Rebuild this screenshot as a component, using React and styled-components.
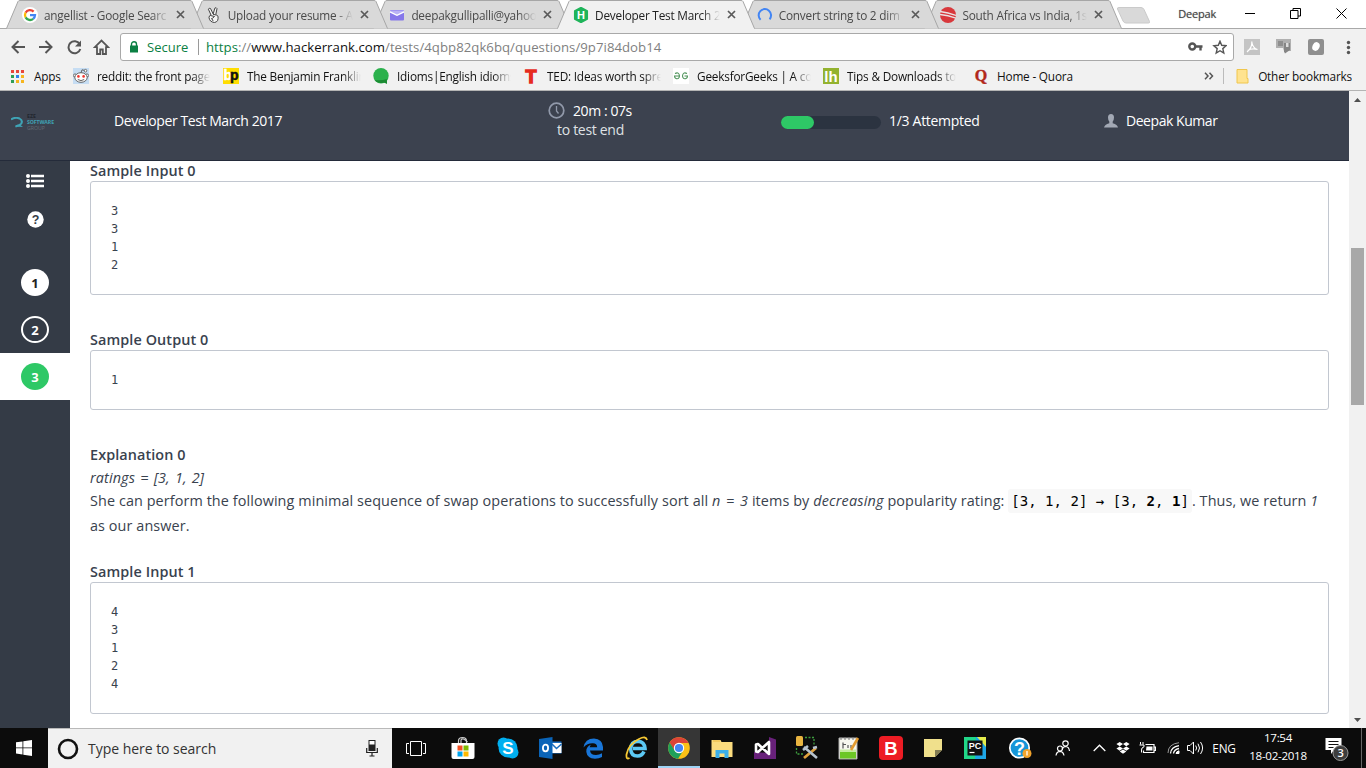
import React from "react";
import styled, { createGlobalStyle, css } from "styled-components";

const GlobalStyle = createGlobalStyle`
  * { box-sizing: border-box; }
  html, body { margin: 0; padding: 0; overflow: hidden; }
  body { font-family: "Open Sans", "Noto Sans", sans-serif; background: #fff; }
  svg { display: block; flex: none; }
`;

const Screen = styled.div`
  width: 1366px;
  height: 768px;
  display: flex;
  flex-direction: column;
  overflow: hidden;
`;

/* ---------- browser chrome ---------- */
const TabStrip = styled.div`
  height: 29px;
  padding-left: 6px;
  display: flex;
  background: #fff;
  border-bottom: 1px solid #a9a9a9;
  flex: none;
`;
const Tab = styled.div`
  position: relative;
  z-index: ${(p) => p.$z};
  width: 183.7px;
  height: 29px;
  flex: none;
  display: flex;
  align-items: center;
  padding-left: 16px;
`;
const TabShape = styled.svg`
  position: absolute;
  left: 0;
  top: 0;
  z-index: -1;
`;
const TabIcon = styled.span`
  width: 16px;
  height: 16px;
  margin-right: 6px;
  flex: none;
`;
const fade = css`
  mask-image: linear-gradient(to right, #000 calc(100% - 18px), transparent);
`;
const TabTitle = styled.span`
  width: 125px;
  margin-right: 7px;
  overflow: hidden;
  white-space: nowrap;
  font-size: 11.8px;
  line-height: 18px;
  letter-spacing: -0.22px;
  color: ${(p) => (p.$active ? "#222" : "#4a4a4a")};
  ${fade}
`;
const NewTab = styled.svg`
  margin: 6px 0 0 8px;
`;
const WindowBar = styled.div`
  margin-left: auto;
  display: flex;
  align-items: center;
  height: 27px;
`;
const Profile = styled.span`
  font-size: 11px;
  color: #444;
  letter-spacing: -0.2px;
  text-shadow: 0 0 1px #999;
  margin-right: 29px;
`;
const WinIcon = styled.svg`
  margin-right: ${(p) => p.$mr}px;
`;

const Toolbar = styled.div`
  height: 34px;
  display: flex;
  align-items: center;
  background: #f1f1f1;
  padding: 2px 0 0 11px;
  flex: none;
`;
const NavIcon = styled.svg`
  margin-right: ${(p) => p.$mr}px;
`;
const Omnibox = styled.div`
  width: 1114px;
  height: 28px;
  display: flex;
  align-items: center;
  background: #fff;
  border: 1px solid #a9a9a9;
  border-radius: 3px;
  padding: 0 6px 0 8px;
  font-size: 13.2px;
  white-space: nowrap;
`;
const Secure = styled.span`
  color: #0b8043;
  margin-left: 8px;
  width: 43px;
  font-size: 13px;
`;
const Divider = styled.i`
  width: 1px;
  height: 16px;
  background: #9a9a9a;
  margin: 0 7px 0 8px;
`;
const Url = styled.span`
  flex: 1;
  color: #7f7f7f;
  letter-spacing: 0.03px;
`;
const Scheme = styled.span`
  color: #0b8043;
`;
const Host = styled.span`
  color: #111;
`;

const Bookmarks = styled.div`
  height: 28px;
  display: flex;
  align-items: center;
  background: #f1f1f1;
  border-bottom: 1px solid #b4b4b4;
  padding: 0 0 1px 10px;
  flex: none;
`;
const Bookmark = styled.div`
  width: ${(p) => p.$w || 150}px;
  flex: none;
  display: flex;
  align-items: center;
  gap: 8px;
`;
const BookmarkText = styled.span`
  max-width: 114px;
  overflow: hidden;
  white-space: nowrap;
  font-size: 11.8px;
  line-height: 18px;
  color: #111;
  letter-spacing: -0.2px;
  ${(p) => p.$fade && fade}
`;
const AppsLabel = styled(BookmarkText)`
  margin-left: 2px;
`;
const BookmarkEnd = styled.div`
  margin-left: auto;
  display: flex;
  align-items: center;
  padding-right: 14px;
`;
const ThinRule = styled.i`
  width: 1px;
  height: 16px;
  background: #bbb;
  margin: 0 12px 0 9px;
`;

/* ---------- page ---------- */
const Page = styled.div`
  height: 637px;
  flex: none;
  display: flex;
`;
const Viewport = styled.div`
  width: 1349px;
  display: flex;
  flex-direction: column;
`;
const Header = styled.header`
  height: 70px;
  flex: none;
  display: grid;
  grid-template-columns: 114px 434px 233px 323px 1fr;
  background: #3c424f;
  border-bottom: 1px solid #242b3a;
  color: #fff;
  font-size: 14px;
  line-height: 19px;
  padding-bottom: 10px;
  align-items: center;
`;
const Logo = styled.div`
  display: flex;
  align-items: center;
  gap: 4px;
  padding: 3px 0 0 11px;
`;
const LogoText = styled.div`
  font: 700 5.2px/6px "Open Sans", sans-serif;
  color: #22262e;
  display: flex;
  flex-direction: column;
`;
const LogoTeal = styled.span`
  color: #3fa3b5;
  letter-spacing: -0.1px;
`;
const LogoGray = styled.span`
  color: #656b75;
  font-weight: 400;
`;
const HeaderText = styled.span`
  letter-spacing: ${(p) => p.$ls || "0"};
  white-space: nowrap;
`;
const Timer = styled.div`
  width: 86px;
  display: flex;
  flex-direction: column;
  padding-bottom: 1px;
`;
const TimerRow = styled.div`
  display: flex;
  align-items: center;
  gap: 8px;
`;
const TimerNote = styled.span`
  padding-left: 9px;
  color: #dfe1e5;
  white-space: nowrap;
  letter-spacing: -0.3px;
`;
const Inline = styled.div`
  display: flex;
  align-items: center;
  gap: 8px;
`;
const Progress = styled.div`
  width: 100px;
  height: 13px;
  margin-top: 3px;
  border-radius: 7px;
  background: #2b3340;
`;
const ProgressFill = styled.div`
  width: 33px;
  height: 13px;
  border-radius: 7px;
  background: #2ec866;
`;
const Body = styled.div`
  flex: 1;
  min-height: 0;
  display: flex;
`;
const Sidebar = styled.nav`
  width: 70px;
  background: #343b46;
  display: flex;
  flex-direction: column;
`;
const SideTool = styled.div`
  height: 39px;
  display: flex;
  align-items: center;
  justify-content: center;
  &:nth-child(2) { margin-bottom: 20px; }
`;
const SideItem = styled.div`
  height: 47px;
  display: flex;
  align-items: center;
  justify-content: center;
  background: ${(p) => (p.$current ? "#fff" : "transparent")};
`;
const bubble = {
  solid: css`background: #fff; color: #222;`,
  ring: css`border: 2px solid #fff; color: #fff;`,
  green: css`background: #2ec866; color: #fff;`,
};
const Bubble = styled.span`
  width: 28px;
  height: 27px;
  border-radius: 50%;
  display: flex;
  align-items: center;
  justify-content: center;
  font-size: 13px;
  font-weight: 700;
  ${(p) => bubble[p.$kind]}
`;
const Main = styled.main`
  flex: 1;
  padding: 0 20px;
  color: #39424e;
  overflow: hidden;
  font-size: 14.4px;
`;
const Heading = styled.h3`
  margin: 0;
  font-size: 14.4px;
  font-weight: 600;
  line-height: 20px;
  color: #39424e;
  letter-spacing: 0.1px;
`;
const Pre = styled.pre`
  margin: 0 0 ${(p) => p.$mb || 0}px;
  padding: 20px;
  border: 1px solid #c2c7d0;
  border-radius: 3px;
  font: 12px/18px "DejaVu Sans Mono", monospace;
  color: #39424e;
`;
const Formula = styled.p`
  margin: 0;
  padding-top: 1px;
  line-height: 23px;
  font-style: italic;
  letter-spacing: 0.12px;
  word-spacing: 1.3px;
`;
const Para = styled.p`
  margin: -1px 0 24px;
  line-height: 25px;
  letter-spacing: 0.09px;
  white-space: nowrap;
`;
const Term = styled.em`
  letter-spacing: 0.18px;
  word-spacing: 1.6px;
`;
const Code = styled.code`
  font: 14px/22px "DejaVu Sans Mono", monospace;
  letter-spacing: 0.03px;
  color: #000;
  background: #f8f8f8;
  border-radius: 3px;
  padding: 4px 3px;
`;
const Scrollbar = styled.div`
  width: 17px;
  background: #f1f1f1;
  display: flex;
  flex-direction: column;
  align-items: center;
  padding: 7px 0 6px;
`;
const Thumb = styled.div`
  width: 13px;
  height: 157px;
  margin: 146px 0 auto;
  background: #a8a8a8;
`;

/* ---------- taskbar ---------- */
const Taskbar = styled.div`
  height: 40px;
  display: flex;
  background: #0c0c0c;
  color: #fff;
  flex: none;
`;
const Cell = styled.div`
  width: ${(p) => p.$w}px;
  height: 40px;
  flex: none;
  display: flex;
  align-items: center;
  justify-content: center;
  font-size: 11.8px;
  letter-spacing: -0.2px;
  ${(p) => p.$active && css`
    background: #363636;
    border-bottom: 2px solid #9fd3f5;
    padding-top: 2px;
  `}
`;
const SearchBox = styled.div`
  width: 344px;
  background: #f1f1f1;
  border-top: 1px solid #b9b9b9;
  display: flex;
  align-items: center;
  padding: 0 14px 0 9px;
`;
const SearchText = styled.span`
  flex: 1;
  margin-left: 9px;
  font-size: 14px;
  color: #333;
  letter-spacing: -0.03px;
`;
const Clock = styled.div`
  width: 74px;
  display: flex;
  flex-direction: column;
  align-items: center;
  font-size: 11.6px;
  line-height: 18px;
  padding-top: 1px;
  letter-spacing: -0.3px;
  white-space: nowrap;
`;
const ShowDesktop = styled.div`
  width: 5px;
  border-left: 1px solid #666;
`;

/* ---------- icons ---------- */
const Glyph = styled.text`
  font-family: ${(p) => p.$family || '"Liberation Sans", sans-serif'};
  font-size: ${(p) => p.$size}px;
  font-weight: 700;
  text-anchor: middle;
  letter-spacing: 0;
`;
const GoogleIcon = () => (
  <svg width="16" height="16" viewBox="0 0 16 16">
    <circle cx="8" cy="8" r="8" fill="#fff" />
    <g fill="none" strokeWidth="2.3">
      <path d="M11.6 4.6A5 5 0 0 0 3.6 5.6" stroke="#ea4335" />
      <path d="M3.6 5.6a5 5 0 0 0 0 4.8" stroke="#fbbc05" />
      <path d="M3.6 10.4a5 5 0 0 0 7.6 1.4" stroke="#34a853" />
      <path d="M11.2 11.8A5 5 0 0 0 13 8.2H8" stroke="#4285f4" />
    </g>
  </svg>
);
const PeaceIcon = () => (
  <svg width="16" height="16" viewBox="0 0 16 16" fill="#f4f4f4" stroke="#444" strokeWidth="1">
    <path d="M5 8 2.4 2.2Q3 .6 4.5 1.5L7.2 7 8.8 1.2Q10.3 0 11 1.6L9.8 7.5 12 9.2Q12.8 15 8.4 15.5 3.5 15 3 10.5 3 8.5 5 8Z" />
    <path d="M4.5 8.5 8.5 9.5 6.2 11.5M7 7.3l3 .7M5 11.5q2 .5 2 2.5" fill="none" />
  </svg>
);
const MailIcon = () => (
  <svg width="16" height="16" viewBox="0 0 16 16">
    <rect x="1" y="3" width="14" height="10.500" rx="1" fill="#8678ea" />
    <path d="M1 3.500h14v1.800L8 8.800 1 5.300Z" fill="#b9b2f5" />
    <path d="M1 4.800 8 8.300 15 4.800" fill="none" stroke="#fff" strokeWidth="1.300" />
  </svg>
);
const HackerIcon = () => (
  <svg width="16" height="16" viewBox="0 0 16 16">
    <path d="M8 .5l6.300 3.500v8L8 15.500l-6.300-3.500V4Z" fill="#1fb45a" stroke="#1fb45a" strokeLinejoin="round" strokeWidth="1.500" />
    <Glyph x="8" y="12" $size={11} fill="#fff">H</Glyph>
  </svg>
);
const SpinnerIcon = () => (
  <svg width="16" height="16" viewBox="0 0 16 16">
    <path d="M3.6 12.800A6.200 6.200 0 1 1 12.600 12.300" fill="none" stroke="#4285f4" strokeWidth="2" />
  </svg>
);
const CricketIcon = () => (
  <svg width="16" height="16" viewBox="0 0 16 16">
    <circle cx="8" cy="8" r="8" fill="#d8383c" />
    <path d="M0 4.500Q8 5.500 16 8.500M0 7.500Q8 8 16 11.200" stroke="#e9e4e4" strokeWidth="1.300" fill="none" />
  </svg>
);
const CloseIcon = () => (
  <svg width="9" height="9" viewBox="0 0 9 9">
    <path d="M1 1l7 7M8 1L1 8" stroke="#5a5a5a" strokeWidth="1.700" />
  </svg>
);
const AppsIcon = () => (
  <svg width="14" height="14" viewBox="0 0 14 14">
    {["#e8453c", "#e8453c", "#e8453c", "#2f9e56", "#2f80ed", "#f6b51e", "#2f9e56", "#f6b51e", "#f6b51e"].map((c, i) => (
      <rect key={i} x={1 + (i % 3) * 5} y={1 + Math.floor(i / 3) * 5} width="3" height="3" fill={c} />
    ))}
  </svg>
);
const RedditIcon = () => (
  <svg width="16" height="16" viewBox="0 0 16 16">
    <rect width="16" height="16" fill="#c6ddf3" />
    <circle cx="2" cy="7.500" r="1.600" fill="#fff" stroke="#555" strokeWidth=".8" />
    <circle cx="14" cy="7.500" r="1.600" fill="#fff" stroke="#555" strokeWidth=".8" />
    <ellipse cx="8" cy="9.500" rx="6.200" ry="4.800" fill="#fff" stroke="#555" strokeWidth=".9" />
    <path d="M8 4.700 9 1.800 12 2.500M4.800 11.500q3.200 2.200 6.400 0" fill="none" stroke="#555" strokeWidth=".9" />
    <circle cx="12.500" cy="2.700" r="1.300" fill="#fff" stroke="#555" strokeWidth=".8" />
    <circle cx="5.400" cy="8.400" r="1.300" fill="#f0342c" />
    <circle cx="10.600" cy="8.400" r="1.300" fill="#f0342c" />
  </svg>
);
const BpIcon = () => (
  <svg width="16" height="16" viewBox="0 0 16 16">
    <rect width="16" height="16" fill="#fd0" />
    <Glyph x="4.700" y="12" $size={14} fill="#fff" stroke="#fff" strokeWidth=".5">b</Glyph>
    <Glyph x="11.300" y="11.800" $size={14} fill="#111" stroke="#111" strokeWidth=".5">p</Glyph>
  </svg>
);
const BallIcon = () => (
  <svg width="16" height="16" viewBox="0 0 16 16">
    <path d="M4 11h10v5l-3-1.500Z" fill="#1c8a33" />
    <circle cx="8" cy="7.700" r="7.700" fill="#2bb14c" />
    <path d="M1.500 12Q8 13 14 11l-.5 4L11 14.500Q5 16.500 1.500 12Z" fill="#1c8a33" />
  </svg>
);
const TedIcon = () => (
  <svg width="16" height="16" viewBox="0 0 16 16">
    <Glyph x="8" y="14.500" $size={18} fill="#e62b1e" stroke="#e62b1e" strokeWidth="1.400">T</Glyph>
  </svg>
);
const GfgIcon = () => (
  <svg width="16" height="16" viewBox="0 0 16 16">
    <rect width="16" height="16" fill="#fff" />
    <path d="M2 5.500q4-2 4.500 2.500Q6 11.500 3 10.500 1.500 10 1.500 8h5M14 5.500Q10 3.500 9.500 8q.5 3.500 3.500 2.500 1.500-.5 1.500-2.500h-3" fill="none" stroke="#4b9157" strokeWidth="1.100" />
  </svg>
);
const LhIcon = () => (
  <svg width="16" height="16" viewBox="0 0 16 16">
    <rect width="16" height="16" fill="#93b22e" />
    <Glyph x="8" y="13.700" $size={15} fill="#fff">lh</Glyph>
  </svg>
);
const QuoraIcon = () => (
  <svg width="16" height="16" viewBox="0 0 16 16">
    <Glyph x="8" y="12.500" $size={16} $family={'"Liberation Serif", serif'} fill="#b1281a" stroke="#b1281a" strokeWidth=".4">Q</Glyph>
  </svg>
);
const QuestionIcon = () => (
  <svg width="17" height="17" viewBox="0 0 17 17">
    <circle cx="8.500" cy="8.500" r="8.200" fill="#fff" />
    <Glyph x="8.500" y="13" $size={12.5} fill="#343b46">?</Glyph>
  </svg>
);

const TABS = [
  { title: "angellist - Google Searc", Icon: GoogleIcon },
  { title: "Upload your resume - A", Icon: PeaceIcon },
  { title: "deepakgullipalli@yahoo", Icon: MailIcon },
  { title: "Developer Test March 2", Icon: HackerIcon, active: true },
  { title: "Convert string to 2 dim", Icon: SpinnerIcon },
  { title: "South Africa vs India, 1s", Icon: CricketIcon },
];
const MARKS = [
  { title: "reddit: the front page", Icon: RedditIcon },
  { title: "The Benjamin Franklin", Icon: BpIcon },
  { title: "Idioms|English idioms", Icon: BallIcon },
  { title: "TED: Ideas worth spre", Icon: TedIcon },
  { title: "GeeksforGeeks | A co", Icon: GfgIcon },
  { title: "Tips & Downloads to", Icon: LhIcon },
];

const Browser = () => (
  <>
    <TabStrip>
      {TABS.map(({ title, Icon, active }, i) => (
        <Tab key={title} $z={active ? 20 : 10 - i}>
          <TabShape width="200" height="29" viewBox="0 0 200 29">
            <path d="M.5 28.500 12 1.500Q12.500.5 14 .5H184Q185.500.5 186 1.500L197.500 28.500" fill={active ? "#f1f1f1" : "#d9d9d9"} stroke="#a6a6a6" />
            {active && <path d="M1 28.500H197" stroke="#f1f1f1" />}
          </TabShape>
          <TabIcon><Icon /></TabIcon>
          <TabTitle $active={active}>{title}</TabTitle>
          <CloseIcon />
        </Tab>
      ))}
      <NewTab width="36" height="18" viewBox="0 0 36 18">
        <path d="M3 1.500H25Q27 1.500 28 3.500L33.500 15.500Q34 17 32.500 17H10Q8 17 7 15L1.500 3Q1 1.500 3 1.500Z" fill="#d9d9d9" stroke="#cacaca" />
      </NewTab>
      <WindowBar>
        <Profile>Deepak</Profile>
        <WinIcon $mr={34} width="11" height="11" viewBox="0 0 11 11"><path d="M0 5.500h10" stroke="#000" /></WinIcon>
        <WinIcon $mr={35} width="11" height="11" viewBox="0 0 11 11"><path d="M.5 2.500h7.500v8H.5zM3 2.500V.5h7.500V8H8" fill="none" stroke="#000" /></WinIcon>
        <WinIcon $mr={19} width="11" height="11" viewBox="0 0 11 11"><path d="M.5.5l10 10M10.500.5l-10 10" stroke="#000" /></WinIcon>
      </WindowBar>
    </TabStrip>
    <Toolbar>
      <NavIcon $mr={14} width="14" height="14" viewBox="0 0 14 14"><path d="M14 7H1.500M7.500 1 1.500 7l6 6" fill="none" stroke="#555" strokeWidth="2" /></NavIcon>
      <NavIcon $mr={14} width="14" height="14" viewBox="0 0 14 14"><path d="M0 7h12.500M6.500 1l6 6-6 6" fill="none" stroke="#555" strokeWidth="2" /></NavIcon>
      <NavIcon $mr={11} width="15" height="15" viewBox="0 0 15 15"><path d="M12.700 4.200A6 6 0 1 0 13.300 9" fill="none" stroke="#555" strokeWidth="2" /><path d="M14 .5v6H8Z" fill="#555" /></NavIcon>
      <NavIcon $mr={10} width="17" height="16" viewBox="0 0 17 16"><path d="M1.800 8.200H4V15h3.200v-4.500h2.600V15H13V8.200h2.200L8.500 1.500Z" fill="none" stroke="#555" strokeWidth="1.800" /></NavIcon>
      <Omnibox>
        <svg width="10" height="12" viewBox="0 0 10 12"><rect x="1" y="4.500" width="8" height="7" fill="#0b8043" /><path d="M2.500 5V3.200a2.500 2.500 0 0 1 5 0V5" fill="none" stroke="#0b8043" strokeWidth="1.400" /></svg>
        <Secure>Secure</Secure>
        <Divider />
        <Url><Scheme>https</Scheme>://<Host>www.hackerrank.com</Host>/tests/4qbp82qk6bq/questions/9p7i84dob14</Url>
        <svg width="15" height="10" viewBox="0 0 15 10"><circle cx="4.300" cy="4.500" r="3" fill="none" stroke="#555" strokeWidth="2.400" /><path d="M7 4.500h7.500M12.500 4.500v4" stroke="#555" strokeWidth="2.400" /></svg>
        <NavIcon $mr={0} width="24" height="15" viewBox="-10 0 24 15"><path d="M7 1.200 8.700 5.300 13.100 5.700 9.800 8.600 10.800 13 7 10.700 3.200 13 4.200 8.600.9 5.700 5.300 5.300Z" fill="none" stroke="#555" strokeWidth="1.400" /></NavIcon>
      </Omnibox>
      <NavIcon $mr={0} width="132" height="18" viewBox="0 0 132 18">
        <rect x="10" y="1" width="16" height="16" fill="#c4c4c4" />
        <path d="M13 14Q18 10 17.800 4.500 17.800 3 18 5q1 5 5.500 6.500Q18 10 13.500 12.500" fill="none" stroke="#fff" strokeWidth="1.200" />
        <path d="M42 1h15v12h-7l-1-3h-7Z" fill="#b0b0b0" /><path d="M50 5h6v7l-5 3.500-1-2Z" fill="#858585" /><path d="M44 3h5v5h-5Z" fill="#8f8f8f" /><path d="M52 5h2.500v4H52Z" fill="#ddd" />
        <rect x="74" y="1" width="16" height="16" rx="2" fill="#8f8f8f" /><ellipse cx="82" cy="8.500" rx="3.500" ry="4.500" transform="rotate(25 82 8.500)" fill="#fff" />
        <g fill="#555"><circle cx="114.500" cy="4.500" r="1.700" /><circle cx="114.500" cy="9.500" r="1.700" /><circle cx="114.500" cy="14.500" r="1.700" /></g>
      </NavIcon>
    </Toolbar>
    <Bookmarks>
      <Bookmark $w={63}><AppsIcon /><AppsLabel>Apps</AppsLabel></Bookmark>
      {MARKS.map(({ title, Icon }) => (
        <Bookmark key={title}><Icon /><BookmarkText $fade>{title}</BookmarkText></Bookmark>
      ))}
      <Bookmark><QuoraIcon /><BookmarkText>Home - Quora</BookmarkText></Bookmark>
      <BookmarkEnd>
        <svg width="10" height="8" viewBox="0 0 10 8"><path d="M1 .8 4 4 1 7.200M5.500.8l3 3.200-3 3.200" fill="none" stroke="#555" strokeWidth="1.500" /></svg>
        <ThinRule />
        <svg width="22" height="15" viewBox="0 0 22 15"><path d="M1 .5h10v9h1v4.500H1Z" fill="#ffe38f" stroke="#f0c64c" /></svg>
        <BookmarkText>Other bookmarks</BookmarkText>
      </BookmarkEnd>
    </Bookmarks>
  </>
);

const PageHeader = () => (
  <Header>
    <Logo>
      <svg width="12" height="11" viewBox="0 0 12 11"><path d="M0 2.500Q4-.3 8.500 1.500q3.500 2 1.800 5Q9 8.500 4.500 9.500" fill="none" stroke="#3fa3b5" strokeWidth="2" /><path d="M4 9.500q3-4 8 .5Z" fill="#3fa3b5" /></svg>
      <LogoText><span>EZE</span><LogoTeal>SOFTWARE</LogoTeal><LogoGray>GROUP</LogoGray></LogoText>
    </Logo>
    <HeaderText $ls="-0.42px">Developer Test March 2017</HeaderText>
    <Timer>
      <TimerRow>
        <svg width="17" height="17" viewBox="0 0 17 17"><circle cx="8.500" cy="8.500" r="7.300" fill="none" stroke="#9199aa" strokeWidth="1.700" /><path d="M8.500 4v5l2 2.500" fill="none" stroke="#9199aa" strokeWidth="1.300" /></svg>
        <HeaderText $ls="-0.42px">20m : 07s</HeaderText>
      </TimerRow>
      <TimerNote>to test end</TimerNote>
    </Timer>
    <Inline>
      <Progress><ProgressFill /></Progress>
      <HeaderText $ls="-0.3px">1/3 Attempted</HeaderText>
    </Inline>
    <Inline>
      <svg width="14" height="14" viewBox="0 0 14 14"><path d="M7 0q3 0 3 3.500Q10 6 8.700 7.500v1.700Q13.500 10.500 14 13.500H0Q.5 10.500 5.300 9.200V7.500Q4 6 4 3.500 4 0 7 0Z" fill="#a3a9b5" /></svg>
      <HeaderText $ls="-0.45px">Deepak Kumar</HeaderText>
    </Inline>
  </Header>
);

const Challenge = () => (
  <Main>
    <Heading>Sample Input 0</Heading>
    <Pre $mb={35}>{"3\n3\n1\n2"}</Pre>
    <Heading>Sample Output 0</Heading>
    <Pre $mb={35}>1</Pre>
    <Heading>Explanation 0</Heading>
    <Formula>ratings = [3, 1, 2]</Formula>
    <Para>
      She can perform the following minimal sequence of swap operations to successfully sort all <Term>n = 3</Term> items by <Term>decreasing</Term> popularity rating: <Code>[3, 1, 2] → [3, <b>2</b>, <b>1</b>]</Code>. Thus, we return <Term>1</Term>
      <br />as our answer.
    </Para>
    <Heading>Sample Input 1</Heading>
    <Pre>{"4\n3\n1\n2\n4"}</Pre>
  </Main>
);

const WindowsTaskbar = () => (
  <Taskbar>
    <Cell $w={48}><svg width="16" height="16" viewBox="0 0 16 16" fill="#fff"><path d="M0 2.300 6.500 1.400V7.500H0ZM7.300 1.300 16 0V7.500H7.300ZM0 8.300H6.500V14.500L0 13.600ZM7.300 8.300H16V16L7.300 14.700Z" /></svg></Cell>
    <SearchBox>
      <svg width="22" height="22" viewBox="0 0 22 22"><circle cx="11" cy="11" r="9" fill="none" stroke="#111" strokeWidth="2.600" /></svg>
      <SearchText>Type here to search</SearchText>
      <svg width="12" height="17" viewBox="0 0 12 17"><rect x="3" y=".5" width="6" height="10" fill="#fff" stroke="#222" /><path d="M3 4.500h6v6H3Z" fill="#222" /><path d="M.7 8v4.500h10.600V8M6 12.500V16M3.500 16h5" fill="none" stroke="#222" strokeWidth="1.200" /></svg>
    </SearchBox>
    <Cell $w={48}><svg width="20" height="15" viewBox="0 0 20 15"><path d="M4.500.5h11v14h-11zM3 2.500H.5v10H3M17 2.500h2.500v10H17" fill="none" stroke="#fff" /></svg></Cell>
    <Cell $w={46}><svg width="24" height="24" viewBox="0 0 24 24"><path d="M7.500 8V5q0-3.500 4-3.500t4 3.500V8M10 7V4q1.500-3 6.500 2" fill="none" stroke="#ccc" strokeWidth="1.200" /><path d="M.5 7h23v14q0 2-2 2h-19q-2 0-2-2Z" fill="#fff" /><path d="M6.500 9.500h5v5h-5z" fill="#f25022" /><path d="M12.500 9.500h5v5h-5z" fill="#7fba00" /><path d="M6.500 15.500h5v5h-5z" fill="#00a4ef" /><path d="M12.500 15.500h5v5h-5z" fill="#ffb900" /></svg></Cell>
    <Cell $w={43}><svg width="22" height="22" viewBox="0 0 22 22"><circle cx="11" cy="11" r="9.500" fill="#00aff0" /><circle cx="6.500" cy="6.500" r="6" fill="#00aff0" /><circle cx="15.500" cy="15.500" r="6" fill="#00aff0" /><Glyph x="11" y="17" $size={17} fill="#fff">S</Glyph></svg></Cell>
    <Cell $w={43}><svg width="23" height="22" viewBox="0 0 23 22"><path d="M13 4.500h9.500v12H13Z" fill="#1b6fc0" /><path d="M13 6h9.500v10H13Z" fill="#fff" /><path d="M13 7 17.500 11.500 22.500 7" fill="none" stroke="#1b6fc0" strokeWidth="1.500" /><path d="M0 2 13.500 0v22L0 20Z" fill="#0a64b8" /><ellipse cx="6.500" cy="11" rx="2.600" ry="3.300" fill="none" stroke="#fff" strokeWidth="1.800" /></svg></Cell>
    <Cell $w={43}><svg width="21" height="21" viewBox="0 0 21 21"><path d="M.5 9.500Q2 .5 11 .5q8.500.5 9 8.500v3.500H7q.5 4.500 6 4.500 3 0 6-1.700V19q-3 1.700-7 1.700-8-.5-8.700-7Q3 8.500 8 6.700 6.700 8 6.700 9.300h7.500Q14 5.500 10 5.300 4.500 5 .5 9.500Z" fill="#1976d8" /></svg></Cell>
    <Cell $w={43}><svg width="24" height="24" viewBox="0 0 24 24"><path d="M19 15.500Q17 20 12.500 20q-6.500 0-6.800-7Q6 5.500 13 5.300q6.500.5 7 7.200H8" fill="none" stroke="#5cc9f5" strokeWidth="3.600" /><path d="M4.500 22Q1 24 1.500 18.500 3.500 8 14 3q7-3.500 8 1" fill="none" stroke="#f7c934" strokeWidth="1.800" /></svg></Cell>
    <Cell $w={42} $active><svg width="22" height="22" viewBox="0 0 22 22"><circle cx="11" cy="11" r="10.800" fill="#fbc116" /><path d="M1.600 5.600A10.800 10.800 0 0 1 20.500 6H11L6.300 13.500Z" fill="#dc4437" /><path d="M1.600 5.600A10.800 10.800 0 0 0 10 21.800L15 14 6.700 13.500Z" fill="#1fa05a" /><circle cx="11" cy="11" r="5.200" fill="#fff" /><circle cx="11" cy="11" r="4.100" fill="#4486f4" /></svg></Cell>
    <Cell $w={44}><svg width="22" height="19" viewBox="0 0 22 19"><path d="M.5 1h9l1 2h11v15H.5Z" fill="#fbdc7e" /><path d="M2 1.500h7v1H2Z" fill="#eab93f" /><path d="M4.500 11h13v8h-4v-4.500h-5V19h-4Z" fill="#3baee8" /></svg></Cell>
    <Cell $w={42}><svg width="22" height="22" viewBox="0 0 22 22"><path d="M15 0 22 2.500V22H0V15L15 16Z" fill="#68217a" /><path d="M2 7.500 2 14.500 4 15 15 5V17L4 7Z" fill="none" stroke="#fff" strokeWidth="2.600" strokeLinejoin="round" /></svg></Cell>
    <Cell $w={42}><svg width="24" height="24" viewBox="0 0 24 24"><rect x="1" y="0" width="7" height="10" rx="1.500" fill="#e9b541" /><path d="M10 1.500h9V9M1.500 12v6H8" fill="none" stroke="#3e9e3e" strokeDasharray="2 1.500" strokeWidth="1.300" /><path d="m9 22 12-10" stroke="#e0a13c" strokeWidth="2.800" /><path d="m9 11 13 11M8 14l5-4M18 12l4-1" stroke="#b7c3cf" strokeWidth="2.600" /></svg></Cell>
    <Cell $w={41}><svg width="22" height="24" viewBox="0 0 22 24"><path d="M1 2h18v21H1Z" fill="#f7f7ef" stroke="#aaa" /><path d="M2 13.500h16v3H2Z" fill="#c5eda0" /><path d="M2 16h16v6.500H2Z" fill="#6cc726" /><path d="M5 6.500v6M5 8.500h3M10 9v3M13 9v3" stroke="#555" strokeWidth="1.200" /><path d="M3 1v3M7 1v3M11 1v3M15 1v3" stroke="#777" /><path d="m13 14 7-12" stroke="#e29a2e" strokeWidth="2.600" /></svg></Cell>
    <Cell $w={44}><svg width="24" height="24" viewBox="0 0 24 24"><rect width="24" height="24" rx="4" fill="#ed1c24" /><Glyph x="12" y="18.500" $size={18.5} fill="#fff">B</Glyph></svg></Cell>
    <Cell $w={40}><svg width="18" height="18" viewBox="0 0 18 18"><path d="M0 0h18v11l-7 7H0Z" fill="#f0e08c" /><path d="M11 11h7l-7 7Z" fill="#817b52" /></svg></Cell>
    <Cell $w={44}><svg width="22" height="22" viewBox="0 0 22 22"><path d="M0 0h22v22H0Z" fill="#21d789" /><path d="M12 0h8l2 10v12H11Z" fill="#1ea7e8" /><path d="M13 0h9v10Z" fill="#e5ec4c" /><rect x="3.500" y="3.500" width="15" height="15" fill="#111" /><Glyph x="11" y="11.500" $size={9} fill="#fff">PC</Glyph><path d="M5.500 15.500h5" stroke="#fff" strokeWidth="1.200" /></svg></Cell>
    <Cell $w={46}><svg width="24" height="24" viewBox="0 0 24 24"><circle cx="11.500" cy="12" r="9.700" fill="#1696d8" stroke="#fff" strokeWidth="1.700" /><Glyph x="11.500" y="18.500" $size={18} fill="#fff">?</Glyph><circle cx="19" cy="17.500" r="4.500" fill="#f2a32c" /><path d="M19 15v4.500" stroke="#fff" strokeWidth="1.300" /></svg></Cell>
    <Cell $w={40}><svg width="16" height="16" viewBox="0 0 16 16" fill="none" stroke="#fff" strokeWidth="1.200"><circle cx="10.500" cy="3.500" r="2.700" /><path d="M7 9.500Q8 6.700 10.500 6.500 14 6.700 14.500 11" /><circle cx="5" cy="8.500" r="2.500" /><path d="M1 15.500Q1.500 11.500 5 11.300q3.300.2 4 4.200" /></svg></Cell>
    <Cell $w={32}><svg width="13" height="8" viewBox="0 0 13 8"><path d="M.7 7 6.500 1.200 12.300 7" fill="none" stroke="#fff" strokeWidth="1.300" /></svg></Cell>
    <Cell $w={16}><svg width="14" height="12" viewBox="0 0 14 12" fill="#fff"><path d="M3.700 0 7 2.100 3.700 4.200.4 2.100ZM10.300 0l3.300 2.100-3.300 2.100L7 2.100ZM3.700 4.500 7 6.600 3.700 8.700.4 6.600ZM10.300 4.500l3.300 2.100-3.300 2.100L7 6.600ZM7 7.500l3.300 2.100L7 11.800 3.700 9.600Z" /></svg></Cell>
    <Cell $w={32}><svg width="17" height="12" viewBox="0 0 17 12"><path d="M6.500 2.500h8.500v8H4.500V8.500M15.500 5h1v3.500h-1" fill="none" stroke="#fff" strokeWidth="1.200" /><path d="M7.500 4.500h6v4H7Z" fill="#fff" /><path d="M1.500 0v2.500M4 0v2.500M.5 3h4.500v1.800L3 6 2.500 8v2.500" fill="none" stroke="#fff" /></svg></Cell>
    <Cell $w={20}><svg width="13" height="12" viewBox="0 0 13 12" fill="none" stroke="#fff"><path d="M1 11Q1 2 12 .7" stroke="#999" /><path d="M3.500 11.500Q4 5 12 3.700M6.500 11.500Q7 7.500 12 6.500" strokeWidth="1.300" /><path d="M9 11.500q.2-2 3-2.700v2.700Z" fill="#fff" /></svg></Cell>
    <Cell $w={24}><svg width="17" height="14" viewBox="0 0 17 14" fill="none" stroke="#fff"><path d="M.5 4.500H3L6.500 1v12L3 9.500H.5Z" /><path d="M8.700 4.500q1.800 2.500 0 5M11 2.700q3 4.300 0 8.600M13.500 1q4.200 6 0 12" /></svg></Cell>
    <Cell $w={34}>ENG</Cell>
    <Clock><span>17:54</span><span>18-02-2018</span></Clock>
    <Cell $w={46}><svg width="26" height="26" viewBox="0 0 26 26"><path d="M.5 3h16v12H9l-3 4v-4H.5Z" fill="#fff" /><path d="M3.500 6.500h10M3.500 9.500h10M3.500 12.500h5" stroke="#111" /><circle cx="15.500" cy="18" r="7.500" fill="#3d3d3d" stroke="#999" /><text x="15.500" y="22" textAnchor="middle" fontSize="11" fontWeight="600" fill="#fff">3</text></svg></Cell>
    <ShowDesktop />
  </Taskbar>
);

export default function App() {
  return (
    <Screen>
      <GlobalStyle />
      <Browser />
      <Page>
        <Viewport>
          <PageHeader />
          <Body>
            <Sidebar>
              <SideTool><svg width="18" height="14" viewBox="0 0 18 14" fill="#fff"><circle cx="2" cy="2" r="2" /><circle cx="2" cy="7" r="2" /><circle cx="2" cy="12" r="2" /><path d="M5 .8h13v2.500H5zM5 5.800h13v2.500H5zM5 10.800h13v2.500H5z" /></svg></SideTool>
              <SideTool><QuestionIcon /></SideTool>
              <SideItem><Bubble $kind="solid">1</Bubble></SideItem>
              <SideItem><Bubble $kind="ring">2</Bubble></SideItem>
              <SideItem $current><Bubble $kind="green">3</Bubble></SideItem>
            </Sidebar>
            <Challenge />
          </Body>
        </Viewport>
        <Scrollbar>
          <svg width="7" height="4" viewBox="0 0 7 4"><path d="M0 4 3.500 0 7 4Z" fill="#505050" /></svg>
          <Thumb />
          <svg width="7" height="4" viewBox="0 0 7 4"><path d="M0 0 3.500 4 7 0Z" fill="#505050" /></svg>
        </Scrollbar>
      </Page>
      <WindowsTaskbar />
    </Screen>
  );
}
